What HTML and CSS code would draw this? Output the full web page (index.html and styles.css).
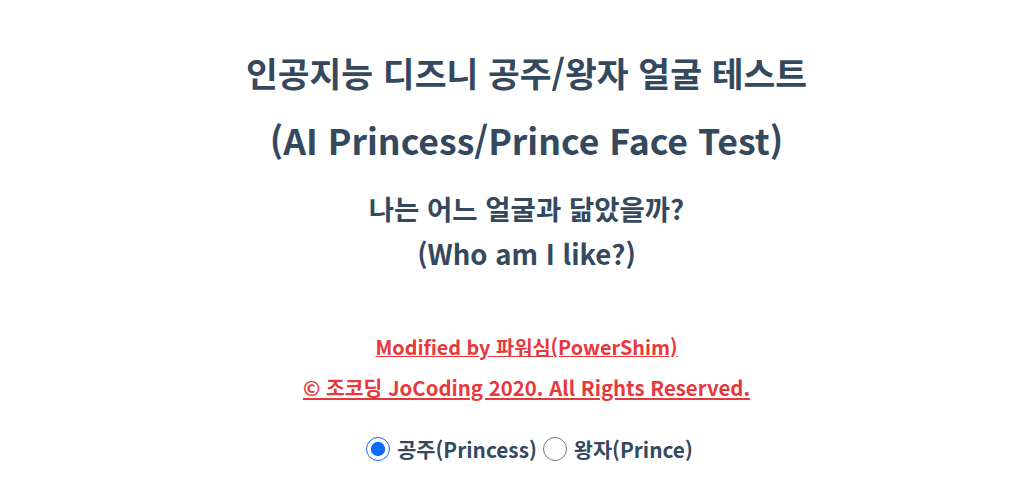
FILE: index.html
```html
<!DOCTYPE html>
<html lang="ko">
<head>
<meta charset="utf-8">
<title>인공지능 디즈니 공주/왕자 얼굴 테스트</title>
<link rel="stylesheet" href="styles.css">
</head>
<body>
<main class="page">
  <h1 class="title">인공지능 디즈니 공주/왕자 얼굴 테스트</h1>
  <h1 class="title title-en">(AI Princess/Prince Face Test)</h1>
  <h2 class="subtitle">나는 어느 얼굴과 닮았을까?</h2>
  <h2 class="subtitle subtitle-en">(Who am I like?)</h2>
  <div class="credits">
    <a class="credit" href="#">Modified by 파워심(PowerShim)</a>
    <a class="credit" href="#">© 조코딩 JoCoding 2020. All Rights Reserved.</a>
  </div>
  <div class="choices">
    <label class="choice"><input type="radio" name="gender" class="radio" checked><span>공주(Princess)</span></label>
    <label class="choice"><input type="radio" name="gender" class="radio"><span>왕자(Prince)</span></label>
  </div>
</main>
</body>
</html>
```
FILE: styles.css
```css
html, body {
  margin: 0;
  padding: 0;
  background: #ffffff;
}
body {
  font-family: "Noto Sans CJK KR", "Noto Sans", sans-serif;
  color: #34495e;
}
.page {
  display: flex;
  flex-direction: column;
  align-items: center;
  text-align: center;
  padding: 39px 0 0 20px;
}
.title {
  margin: 0;
  font-size: 34.6px;
  font-weight: 700;
  line-height: 67px;
  white-space: nowrap;
}
.title-en {
  font-size: 35.6px;
}
.subtitle {
  margin: 13px 0 0;
  font-size: 27.5px;
  font-weight: 700;
  line-height: 44px;
  white-space: nowrap;
}
.subtitle-en {
  margin-top: 1px;
}
.credits {
  margin-top: 52px;
  display: flex;
  flex-direction: column;
  align-items: center;
}
.credit {
  color: #e8383b;
  font-size: 20.4px;
  font-weight: 700;
  line-height: 40px;
  text-decoration: underline;
  white-space: nowrap;
}
.credit:first-child {
  font-size: 19.8px;
}
.choices {
  margin-top: 27px;
  display: flex;
  align-items: center;
  gap: 0;
}
.choice {
  display: flex;
  align-items: center;
  font-size: 20.8px;
  font-weight: 700;
  line-height: 30px;
  color: #34495e;
}
.radio {
  width: 24px;
  height: 24px;
  margin: 0 7px 0 6px;
  accent-color: #0b6cf5;
}
```
